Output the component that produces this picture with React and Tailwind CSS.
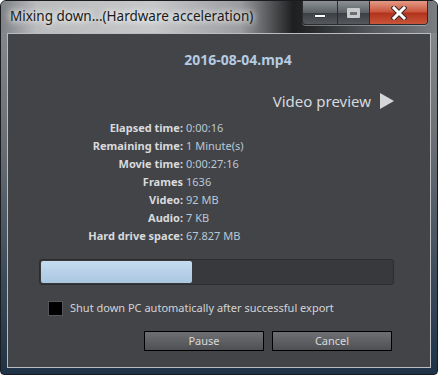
import React from "react";

const stats = [
  ["Elapsed time:", "0:00:16"],
  ["Remaining time:", "1 Minute(s)"],
  ["Movie time:", "0:00:27:16"],
  ["Frames", "1636"],
  ["Video:", "92 MB"],
  ["Audio:", "7 KB"],
  ["Hard drive space:", "67.827 MB"],
];

function CaptionButtons() {
  return (
    <div className="flex h-[24px] mr-[9px] rounded-b-[4px] border border-t-0 border-[#2a2c30] overflow-hidden shadow-[0_1px_0_rgba(255,255,255,0.35)]">
      <div className="w-[35px] flex items-center justify-center border-r border-[#2a2c30] bg-[linear-gradient(to_bottom,#8d9196,#5c6166_50%,#3b3f44_52%,#55595e)]">
        <div className="w-[12px] h-[4px] mt-[7px] bg-white border border-[#3a3d40] rounded-[1px]" />
      </div>
      <div className="w-[32px] flex items-center justify-center border-r border-[#2a2c30] bg-[linear-gradient(to_bottom,#8d9196,#5c6166_50%,#3b3f44_52%,#55595e)]">
        <div className="w-[13px] h-[10px] border-[3px] border-[#c8cacc] border-t-[4px] rounded-[1px] bg-[#6a6e72]" />
      </div>
      <div className="w-[57px] flex items-center justify-center bg-[linear-gradient(to_bottom,#e49a86,#c9553c_48%,#b2321c_52%,#c8553a)]">
        <svg width="16" height="14" viewBox="0 0 16 14">
          <path d="M3 2 L13 12 M13 2 L3 12" stroke="#3a2a28" strokeWidth="5" strokeLinecap="square" />
          <path d="M3 2 L13 12 M13 2 L3 12" stroke="#ffffff" strokeWidth="3" strokeLinecap="square" />
        </svg>
      </div>
    </div>
  );
}

export default function App() {
  return (
    <div className="w-[438px] h-[375px] flex flex-col rounded-t-[6px] rounded-b-[4px] border border-[#1a1c20] bg-[linear-gradient(to_bottom,#8b8e92_0%,#6d7176_35%,#3a4a5a_75%,#1e3347_100%)] font-['Noto_Sans',sans-serif] overflow-hidden">
      <div className="h-[32px] flex items-start justify-between bg-[linear-gradient(to_right,#7e8185_0%,#b9bbbd_8%,#c6c8ca_35%,#9a9c9f_55%,#1e1f21_67%,#26282a_71%,#55595d_85%,#7a7e82_100%)]">
        <div className="pl-[9px] pt-[7px] text-[13.5px] leading-[16px] text-[#1a1a1a] [text-shadow:0_0_6px_#ffffff,0_0_10px_#ffffff]">
          Mixing down...(Hardware acceleration)
        </div>
        <CaptionButtons />
      </div>

      <div className="mx-[6px] h-[335px] border border-[#b9bdc2] bg-[#434448] flex flex-col">
        <div className="pt-[16px] pl-[38px] text-center text-[14px] leading-[20px] font-bold text-[#b4cbe2]">
          2016-08-04.mp4
        </div>

        <div className="mt-[21px] pr-[36px] flex items-center justify-end gap-[9px] text-[15px] leading-[20px] text-[#d6dade]">
          <span>Video preview</span>
          <svg width="14" height="16" viewBox="0 0 14 16">
            <path d="M0 0 L14 8 L0 16 Z" fill="#d4d6d8" />
          </svg>
        </div>

        <div className="mt-[8px] grid grid-cols-[175px_1fr] gap-x-[3px] text-[11px] leading-[18px]">
          {stats.map(([label, value]) => (
            <React.Fragment key={label}>
              <span className="text-right font-bold text-[#d8dadc]">{label}</span>
              <span className="text-[#b9c8d6]">{value}</span>
            </React.Fragment>
          ))}
        </div>

        <div className="mt-[14px] ml-[31px] mr-[36px] h-[26px] rounded-[3px] border border-[#2c2d30] bg-[#38393c] p-[1px]">
          <div className="h-full w-[151px] rounded-[2px] bg-[linear-gradient(to_bottom,#c6dcf0,#aac6e0)]" />
        </div>

        <label className="mt-[15px] ml-[40px] flex items-center gap-[7px] text-[11px] leading-[16px] text-[#d2d4d6]">
          <span className="w-[15px] h-[15px] bg-black border border-[#55575a]" />
          Shut down PC automatically after successful export
        </label>

        <div className="mt-[15px] ml-[136px] flex gap-[8px]">
          {["Pause", "Cancel"].map((t) => (
            <button
              key={t}
              className="w-[120px] h-[20px] border border-black bg-[linear-gradient(to_bottom,#6e6f72,#4f5053)] text-[11px] leading-[16px] text-[#d8d9da]"
            >
              {t}
            </button>
          ))}
        </div>
      </div>
    </div>
  );
}
